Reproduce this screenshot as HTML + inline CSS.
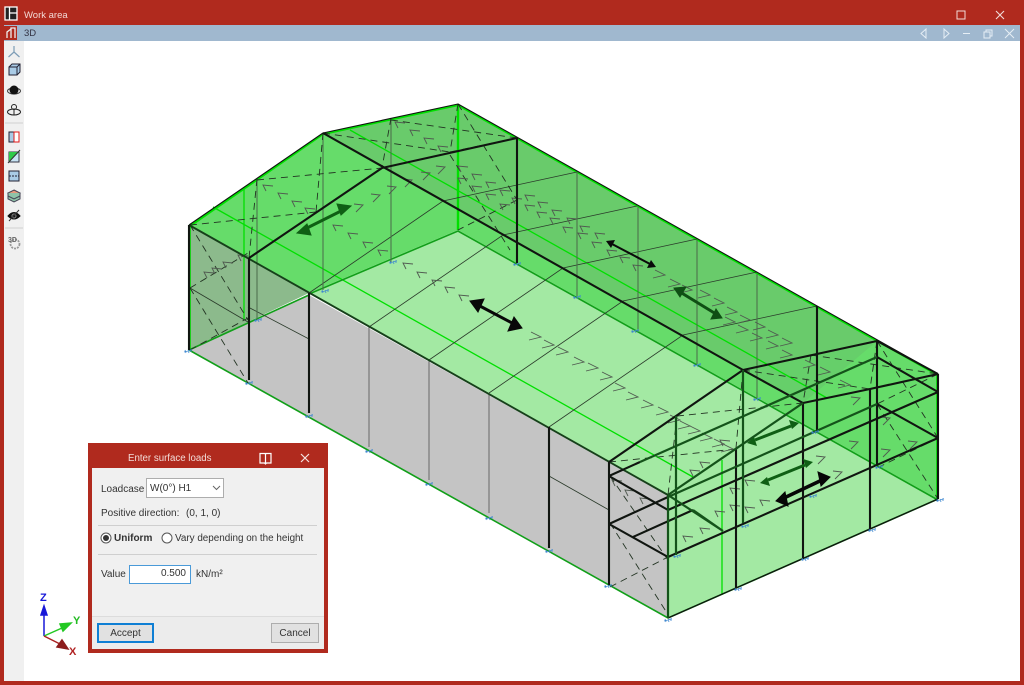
<!DOCTYPE html>
<html><head><meta charset="utf-8">
<style>
html,body{margin:0;padding:0;width:1024px;height:685px;overflow:hidden;background:#fff;font-family:"Liberation Sans",sans-serif}
#w{position:absolute;left:0;top:0;width:1024px;height:685px;filter:blur(.35px);overflow:hidden}
#w div{position:absolute;box-sizing:border-box}
.t{white-space:nowrap;font-size:10px;color:#333;line-height:12px}
</style></head><body><div id="w">
<div style="left:0;top:0;width:1024px;height:685px;background:#b02a1e"></div>
<div style="left:4px;top:25px;width:1016px;height:656px;background:#fff"></div>
<div style="left:4px;top:25px;width:1016px;height:16px;background:#a0b8cf"></div>
<div style="left:4px;top:41px;width:20px;height:640px;background:#f0f0f0"></div>
<div class="t" style="left:24px;top:10px;color:#f3d9d5;font-size:9.5px">Work area</div>
<div class="t" style="left:24px;top:28px;color:#334;font-size:9.5px">3D</div>

<svg style="position:absolute;left:0;top:0" width="1024" height="685" viewBox="0 0 1024 685">
<defs>
<path id="l" d="M3 6L0 0L10 1" fill="none"/>
<path id="r" d="M-10-5L0 0L-12 3" fill="none"/>
<path id="s" d="M-9-1L0 0L-7 7" fill="none"/>
<path id="b" d="M-4 1L4-1M-3-1L-2 2M0-1L1 2M3-2L3 1" fill="none" stroke="#3c86cf" stroke-width=".8"/>
</defs>
<!-- title icons -->
<g fill="none" stroke="#fff" stroke-width="1.3"><rect x="5" y="7" width="12" height="13" fill="#222"/><path d="M9.5 7V20M9.5 13H17" /></g>
<rect x="957" y="11" width="8" height="8" fill="none" stroke="#f2dcd8" stroke-width="1"/>
<path d="M996 11L1004 19M1004 11L996 19" stroke="#f2dcd8" stroke-width="1.1"/>
<g fill="none" stroke="#e6eef5" stroke-width="1"><path d="M926 29L921 33.500L926 38ZM944 29L949 33.500L944 38ZM963 33.500H970M984 32H990V38H984ZM986 32V30H992V36H990M1005 29L1014 38M1014 29L1005 38"/></g>
<rect x="4" y="26" width="13" height="14" fill="#b02a1e"/>
<path d="M7 38V32L11 29M11 38V28H15V38" stroke="#eee" stroke-width="1.300" fill="none"/>
<!-- toolbar -->
<path d="M5 123H23M5 228H23" stroke="#cfcfcf"/>
<g fill="none" stroke-width="1">
<path d="M14 52V46M14 52L8.500 57M14 52L19.500 57" stroke="#7c9cb6" stroke-width="1.200"/>
<path d="M9 67H17V75H9ZM9 67L12 64H20V72L17 75M17 67L20 64" stroke="#223" fill="#a9cbe6"/>
<ellipse cx="14" cy="91" rx="6.500" ry="3" stroke="#444"/><circle cx="14" cy="90" r="4" fill="#111" stroke="#111"/>
<circle cx="14" cy="107" r="2.500" stroke="#222"/><path d="M14 109V115" stroke="#222"/><ellipse cx="14" cy="112" rx="6.500" ry="3" stroke="#222"/>
<rect x="9" y="132" width="5" height="10" fill="#a9cbe6" stroke="#223"/><rect x="14" y="132" width="5" height="10" fill="#fff" stroke="#e01818"/>
<rect x="9" y="152" width="10" height="10" fill="#c8e4f4" stroke="#334"/><path d="M9 162V152H19Z" fill="#2ecb4a"/><path d="M8 163L20 150" stroke="#333"/>
<rect x="9" y="171" width="10" height="10" fill="#a9cbe6" stroke="#223"/><path d="M9 176H19" stroke="#223" stroke-dasharray="2 1"/>
<path d="M14 190L20 193L14 196L8 193Z" fill="#e9967a" stroke="#445"/><path d="M8 193V199L14 202L20 199V193M8 196L14 199L20 196" stroke="#445" fill="#8fc2a8"/>
<path d="M8 216Q14 209 20 216Q14 222 8 216Z" fill="#111" stroke="#111"/><circle cx="14" cy="216" r="2" stroke="#888"/><path d="M9 221L19 210" stroke="#333"/>
<circle cx="15" cy="244" r="4.500" stroke="#999" stroke-dasharray="2 1" stroke-width="1.800"/>
</g>
<text x="8" y="242" font-size="7" font-weight="bold" fill="#666" font-family="Liberation Sans">3D</text>

<!-- surfaces -->
<polygon points="189,350 309,295 668,495 668,618" fill="#c4c4c4"/>
<polygon points="309,293 458,230 938,499 668,618 668,495" fill="#a3e9a3"/>
<polygon points="189,225 323,133 458,104 938,374 938,499 458,230 309,293 249,258" fill="#66dc6a"/>
<polygon points="189,225 249,258 309,293 189,350" fill="#8cba8c"/>
<polygon points="323,133 458,104 938,374 877,341 803,403 743,370" fill="#69cb6b"/>
<polygon points="743,370 877,341 803,403" fill="#66cf6a"/>

<!-- bright green lines -->
<g fill="none" stroke="#00e000" stroke-width="1.300">
<path d="M213 207L693 477M350 130L827 398M244 188V320M722 460V595"/>
<path d="M190 225V350" stroke-width="1.600"/>
<path d="M458 104V230" stroke-width="2.400"/>
<path d="M190 226L323 134L458 105L938 375" stroke-width="2.200"/>
<path d="M937 375V499" stroke-width="1.600"/>
</g>
<g fill="none" stroke="#119f19" stroke-width="1.600">
<path d="M309 294L458 231L938 500M189 350L668 618L938 499M189 350L309 295" />
</g>

<!-- thin lines -->
<g fill="none" stroke="#2a3a2a" stroke-width=".8">
<path d="M309 293L443 201L577 172M369 327L503 235L637 206M429 360L563 268L697 239M489 393L623 301L757 272M549 427L683 335L817 306"/>
<path d="M190 288L248 322M248 307L309 339M549 476L609 510"/>
</g>
<g fill="none" stroke="#4a6a4a" stroke-width="1">
<path d="M257 179V320M323 133V290M391 118V262M577 172V297M638 207V331M697 240V365M757 274V398"/>
</g>
<g fill="none" stroke="#777" stroke-width="1.200"><path d="M369 327V447M429 360V480M489 393V513"/></g>

<!-- dashed -->
<g fill="none" stroke="#223322" stroke-width=".9" stroke-dasharray="7 5">
<path d="M190 225L316 212M257 180L382 168M257 179L249 258M323 133L316 212M391 118L382 168M323 133L450 152M391 120L517 138M458 104L450 152M450 152L517 138"/>
<path d="M190 225L248 320M190 288L248 383M190 288L248 253M190 350L248 318"/>
<path d="M458 104L517 200M450 155L510 250M517 200L458 230"/>
<path d="M609 462L736 449M677 416L803 403M677 416L668 495M743 370L736 448M811 355L803 403M743 370L870 389M811 355L938 374M877 341L870 389"/>
<path d="M877 341L938 438M877 404L938 499M938 374L877 404M938 438L877 468"/>
<path d="M610 523L667 613M610 587L668 557M610 476L668 560"/>
</g>

<!-- chevrons -->
<g stroke="#505a50" stroke-width=".9">
<use href="#l" x="403" y="263"/><use href="#l" x="417" y="272"/><use href="#l" x="432" y="280"/><use href="#l" x="445" y="287"/><use href="#l" x="459" y="295"/>
<use href="#r" x="541" y="337"/><use href="#r" x="554" y="345"/><use href="#r" x="568" y="352"/><use href="#r" x="584" y="362"/><use href="#r" x="598" y="368"/><use href="#r" x="612" y="377"/><use href="#r" x="625" y="388"/><use href="#r" x="638" y="397"/><use href="#r" x="653" y="405"/><use href="#r" x="668" y="412"/><use href="#r" x="680" y="420"/><use href="#r" x="690" y="426"/><use href="#r" x="700" y="431"/><use href="#r" x="712" y="438"/><use href="#r" x="724" y="444"/><use href="#r" x="733" y="449"/>
<use href="#l" x="263" y="185"/><use href="#l" x="278" y="193"/><use href="#l" x="292" y="201"/><use href="#l" x="305" y="208"/>
<use href="#l" x="333" y="225"/><use href="#l" x="348" y="233"/><use href="#l" x="363" y="242"/><use href="#l" x="378" y="250"/>
<use href="#s" x="363" y="205"/><use href="#s" x="380" y="195"/><use href="#s" x="396" y="187"/><use href="#s" x="412" y="180"/><use href="#s" x="430" y="173"/><use href="#s" x="445" y="167"/>
<use href="#l" x="212" y="268"/><use href="#l" x="223" y="262"/><use href="#l" x="238" y="255"/><use href="#l" x="204" y="272"/>
<use href="#l" x="395" y="122"/><use href="#l" x="410" y="130"/><use href="#l" x="424" y="138"/><use href="#l" x="438" y="146"/>
<use href="#l" x="458" y="166"/><use href="#l" x="472" y="174"/><use href="#l" x="486" y="182"/><use href="#l" x="500" y="190"/>
<use href="#l" x="458" y="178"/><use href="#l" x="472" y="186"/><use href="#l" x="486" y="194"/><use href="#l" x="500" y="204"/><use href="#l" x="512" y="198"/>
<use href="#l" x="525" y="195"/><use href="#l" x="538" y="202"/><use href="#l" x="552" y="210"/><use href="#l" x="567" y="218"/><use href="#l" x="580" y="226"/><use href="#l" x="595" y="233"/>
<use href="#l" x="525" y="205"/><use href="#l" x="537" y="212"/><use href="#l" x="550" y="218"/><use href="#l" x="563" y="227"/><use href="#l" x="578" y="233"/><use href="#l" x="592" y="242"/><use href="#l" x="607" y="250"/><use href="#l" x="620" y="257"/><use href="#l" x="633" y="265"/>
<use href="#r" x="665" y="275"/><use href="#r" x="680" y="284"/><use href="#r" x="692" y="290"/>
<use href="#r" x="710" y="295"/><use href="#r" x="724" y="303"/><use href="#r" x="737" y="312"/><use href="#r" x="750" y="320"/><use href="#r" x="765" y="327"/><use href="#r" x="778" y="335"/><use href="#r" x="792" y="343"/>
<use href="#r" x="735" y="322"/><use href="#r" x="748" y="330"/><use href="#r" x="762" y="338"/><use href="#r" x="778" y="346"/><use href="#r" x="792" y="355"/>
<use href="#r" x="815" y="365"/><use href="#r" x="830" y="372"/><use href="#r" x="850" y="385"/>
<use href="#l" x="683" y="536"/><use href="#l" x="700" y="528"/><use href="#l" x="715" y="511"/><use href="#l" x="730" y="505"/><use href="#l" x="745" y="507"/><use href="#l" x="760" y="500"/><use href="#l" x="730" y="488"/><use href="#l" x="745" y="480"/>
<use href="#s" x="825" y="457"/><use href="#s" x="842" y="472"/><use href="#s" x="858" y="442"/><use href="#s" x="890" y="450"/><use href="#s" x="917" y="442"/><use href="#s" x="890" y="418"/><use href="#s" x="860" y="398"/>
<use href="#l" x="612" y="480"/><use href="#l" x="625" y="490"/><use href="#l" x="640" y="498"/><use href="#l" x="690" y="470"/><use href="#l" x="700" y="462"/><use href="#l" x="720" y="440"/>
</g>

<!-- thick frames -->
<g fill="none" stroke="#101510" stroke-width="2.100" stroke-linejoin="round">
<path d="M189 225L323 133L458 104L938 374" stroke-width="1.100"/>
<path d="M189 225L668 495" stroke="#16401a" stroke-width="1.900"/>
<path d="M249 258L382 168L517 138"/>
<path d="M323 133L743 370L803 403"/>
<path d="M609 462L743 370L877 341L938 374"/>
<path d="M803 403L870 389L938 374"/>
<path d="M609 476L668 510L938 392M609 524L668 557L938 438M877 357L938 392M877 404L938 438M609 524L668 497M609 476L640 462"/>
<path d="M189 225V350M249 258V380M309 293V413M549 427V548M609 462V585M517 138V263M817 306V432M877 341V465M736 448V588M803 403V558M870 389V529M938 374V499" />
<path d="M668 618L938 499" stroke-width="1.300"/>
<path d="M633 537L693 510"/>
</g>
<g fill="none" stroke="#14531a" stroke-width="2.200">
<path d="M668 495V618M676 416V555M743 370V523"/>
<path d="M668 495L803 403M640 462L877 357M668 497L877 404M668 495L723 531M693 510L723 531"/>
</g>

<!-- arrows -->
<g stroke-width="3" fill="none">
<path d="M478 305L514 324" stroke="#080808"/><path d="M484 299L470 301L478 312ZM508 331L522 328L514 317Z" fill="#080808" stroke="#080808" stroke-width="1"/>
<path d="M303 230L345 209" stroke="#0f5f14"/><path d="M311 235L297 233L307 224ZM337 204L351 206L341 215Z" fill="#0f5f14" stroke="#0f5f14" stroke-width="1"/>
<path d="M612 244L650 264" stroke="#0a0a0a" stroke-width="2"/><path d="M615 240L606 241L611 248ZM647 268L656 267L651 260Z" fill="#0a0a0a"/>
<path d="M680 292L716 314" stroke="#0f4f14"/><path d="M686 287L674 288L680 297ZM711 319L722 318L716 309Z" fill="#0f4f14" stroke="#0f4f14" stroke-width="1"/>
<path d="M755 440L791 426" stroke="#0f5f14"/><path d="M757 446L747 443L754 437ZM789 420L799 423L792 429Z" fill="#0f5f14"/>
<path d="M768 480L805 465" stroke="#0f5f14"/><path d="M770 486L760 483L767 477ZM803 459L813 462L806 468Z" fill="#0f5f14"/>
<path d="M784 498L822 480" stroke="#060606" stroke-width="3.500"/><path d="M788 506L776 501L785 492ZM818 472L830 477L821 486Z" fill="#060606" stroke="#060606" stroke-width="1"/>
</g>

<!-- supports -->
<g>
<use href="#b" x="188" y="351"/><use href="#b" x="249" y="383"/><use href="#b" x="309" y="416"/><use href="#b" x="369" y="451"/><use href="#b" x="429" y="484"/><use href="#b" x="489" y="518"/><use href="#b" x="549" y="551"/><use href="#b" x="608" y="586"/><use href="#b" x="668" y="620"/><use href="#b" x="738" y="589"/><use href="#b" x="805" y="559"/><use href="#b" x="872" y="530"/><use href="#b" x="940" y="500"/><use href="#b" x="258" y="320"/><use href="#b" x="325" y="291"/><use href="#b" x="393" y="262"/><use href="#b" x="577" y="297"/><use href="#b" x="635" y="331"/><use href="#b" x="697" y="365"/><use href="#b" x="757" y="399"/><use href="#b" x="815" y="432"/><use href="#b" x="677" y="556"/><use href="#b" x="745" y="526"/><use href="#b" x="813" y="496"/><use href="#b" x="879" y="467"/><use href="#b" x="517" y="264"/>
</g>

<!-- axes -->
<g fill="none" stroke-width="1.500">
<path d="M44 636V614" stroke="#1818d8"/><path d="M41 615L44 606L47 615Z" fill="#1818d8" stroke="#1818d8"/>
<path d="M44 636L62 628" stroke="#22c822"/><path d="M60 624L71 623L63 631Z" fill="#22c822" stroke="#22c822"/>
<path d="M44 636L60 644" stroke="#aa2222"/><path d="M62 640L68 649L57 647Z" fill="#8c1c1c" stroke="#8c1c1c"/>
</g>
<g font-family="Liberation Sans" font-size="11" font-weight="bold">
<text x="40" y="601" fill="#1818d8">Z</text><text x="73" y="624" fill="#22bb22">Y</text><text x="69" y="655" fill="#b02222">X</text>
</g>
</svg>

<!-- dialog -->
<div style="left:88px;top:443px;width:240px;height:210px;background:#b02a1e"></div>
<div style="left:92px;top:468px;width:232px;height:181px;background:#f0f0f0"></div>
<div style="left:92px;top:616px;width:232px;height:33px;background:#ececec;border-top:1px solid #dcdcdc"></div>
<div class="t" style="left:128px;top:453px;color:#f3dcd8;font-size:9.7px">Enter surface loads</div>
<svg style="position:absolute;left:259px;top:452px" width="14" height="13"><path d="M1 1.500H6L6.500 2.500L7 1.500H12V11H7.500L6.500 12L5.500 11H1ZM6.500 2.500V11" fill="none" stroke="#fff" stroke-width="1.200"/></svg>
<svg style="position:absolute;left:300px;top:453px" width="11" height="11"><path d="M1 1L9 9M9 1L1 9" stroke="#f5e4e2" stroke-width="1.200"/></svg>
<div class="t" style="left:101px;top:484px">Loadcase</div>
<div style="left:146px;top:478px;width:78px;height:20px;background:#fff;border:1px solid #adadad"></div>
<div class="t" style="left:150px;top:483px">W(0°) H1</div>
<svg style="position:absolute;left:212px;top:484px" width="10" height="8"><path d="M1 2L4.500 5.500L8 2" fill="none" stroke="#666"/></svg>
<div class="t" style="left:101px;top:508px">Positive direction:</div>
<div class="t" style="left:186px;top:508px">(0, 1, 0)</div>
<div style="left:98px;top:525px;width:219px;height:1px;background:#cfcfcf"></div>
<svg style="position:absolute;left:100px;top:532px" width="80" height="13"><circle cx="6" cy="6" r="5" fill="#fff" stroke="#555"/><circle cx="6" cy="6" r="3" fill="#333"/><circle cx="67" cy="6" r="5" fill="#fff" stroke="#555"/></svg>
<div class="t" style="left:114px;top:533px;font-weight:bold">Uniform</div>
<div class="t" style="left:175px;top:533px;font-size:9.9px">Vary depending on the height</div>
<div style="left:98px;top:554px;width:219px;height:1px;background:#cfcfcf"></div>
<div class="t" style="left:101px;top:569px">Value</div>
<div style="left:129px;top:565px;width:62px;height:19px;background:#fff;border:1px solid #4a9ad8"></div>
<div class="t" style="left:130px;top:568px;width:56px;text-align:right">0.500</div>
<div class="t" style="left:196px;top:569px">kN/m²</div>
<div style="left:97px;top:623px;width:57px;height:20px;background:#e1e1e1;border:2px solid #0f7fd4"></div>
<div class="t" style="left:97px;top:628px;width:57px;text-align:center">Accept</div>
<div style="left:271px;top:623px;width:48px;height:20px;background:#e1e1e1;border:1px solid #adadad"></div>
<div class="t" style="left:271px;top:628px;width:48px;text-align:center">Cancel</div>
</div></body></html>
